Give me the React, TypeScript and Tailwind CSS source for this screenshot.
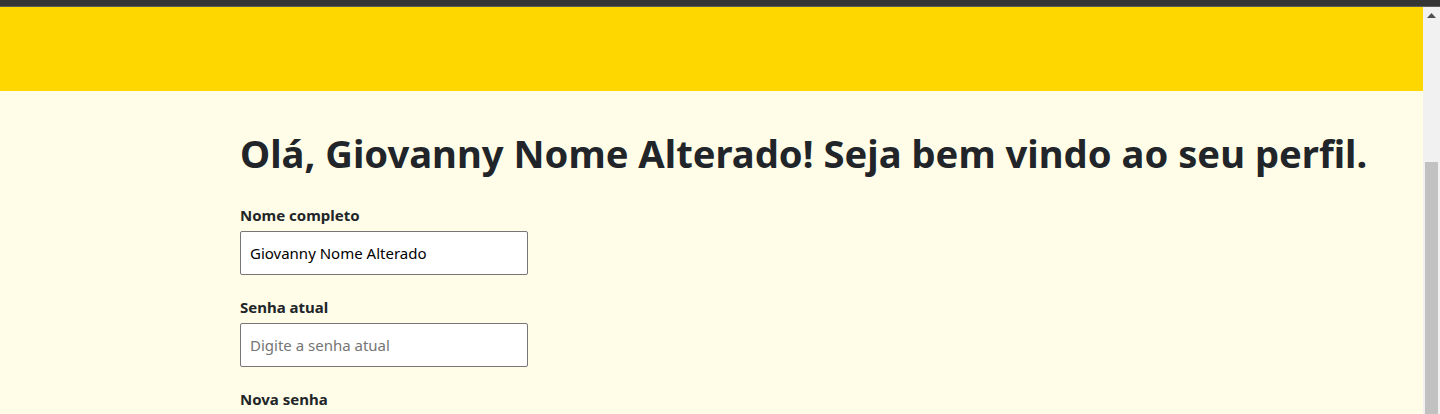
import { useState } from "react";

const Field = ({
  label,
  value,
  placeholder,
  onChange,
  type = "text",
}: {
  label: string;
  value: string;
  placeholder?: string;
  onChange: (v: string) => void;
  type?: string;
}) => (
  <div className="flex flex-col mb-5">
    <label className="text-[15px] leading-6 font-bold text-[#212529] mb-1">{label}</label>
    <input
      type={type}
      value={value}
      placeholder={placeholder}
      onChange={(e) => onChange(e.target.value)}
      className="w-[288px] h-[44px] bg-white border border-[#767676] rounded-[2px] px-[9px] text-[15px] text-black placeholder:text-[#757575] outline-none"
    />
  </div>
);

const App = () => {
  const [nome, setNome] = useState("Giovanny Nome Alterado");
  const [senha, setSenha] = useState("");
  const [nova, setNova] = useState("");

  return (
    <div className="h-[414px] overflow-hidden flex flex-col font-['Noto_Sans',sans-serif]">
      {/* browser chrome strip */}
      <div className="h-[7px] bg-[#353535] border-b border-[#5c5c5c] shrink-0" />

      <div className="flex flex-1 min-h-0">
        <main className="flex-1 bg-[#fffde7] flex flex-col">
          <header className="h-[84px] bg-[#ffd700] shrink-0" />

          <section className="pl-[240px] pt-[38px]">
            <h1 className="text-[38.2px] leading-[48px] font-bold text-[#212529] mb-[26px] whitespace-nowrap">
              Olá, Giovanny Nome Alterado! Seja bem vindo ao seu perfil.
            </h1>

            <Field label="Nome completo" value={nome} onChange={setNome} />
            <Field
              label="Senha atual"
              value={senha}
              placeholder="Digite a senha atual"
              onChange={setSenha}
              type="password"
            />
            <Field
              label="Nova senha"
              value={nova}
              placeholder="Digite a nova senha"
              onChange={setNova}
              type="password"
            />
          </section>
        </main>

        {/* fake scrollbar */}
        <div className="w-[17px] bg-[#f1f1f1] flex flex-col items-center shrink-0">
          <div className="h-[17px] flex items-center justify-center">
            <svg width="9" height="5" viewBox="0 0 9 5">
              <path d="M0 5 L4.5 0 L9 5 Z" fill="#505050" />
            </svg>
          </div>
          <div className="mt-[138px] w-[13px] flex-1 bg-[#c1c1c1]" />
        </div>
      </div>
    </div>
  );
};

export default App;
